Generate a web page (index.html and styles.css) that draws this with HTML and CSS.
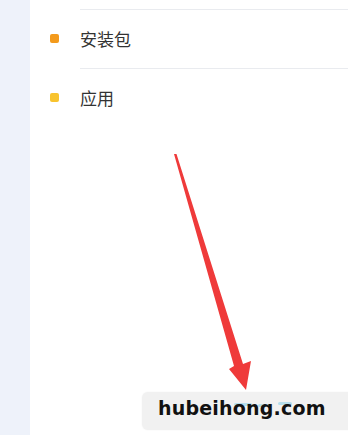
FILE: index.html
```html
<!DOCTYPE html>
<html lang="zh">
<head>
<meta charset="utf-8">
<link rel="stylesheet" href="styles.css">
</head>
<body>
<div class="page">
  <aside class="side"></aside>
  <main class="panel">
    <ul class="list">
      <li class="item"><span class="dot dot-orange"></span><span class="label">安装包</span></li>
      <li class="item"><span class="dot dot-yellow"></span><span class="label">应用</span></li>
    </ul>
  </main>
</div>
<svg class="arrow" width="348" height="435" viewBox="0 0 348 435">
  <polygon points="174,154 176.5,154 243,364 251,361 246,390 229,369 234,366" fill="#ef3a3a"/>
</svg>
<div class="mark">
  <span class="ghost ghost-a"></span>
  <span class="ghost ghost-b"></span>
  <span class="ghost ghost-c"></span>
  <span class="mark-text">hubeihong.com</span>
</div>
</body>
</html>
```
FILE: styles.css
```css
html, body {
  margin: 0;
  padding: 0;
  width: 348px;
  height: 435px;
  overflow: hidden;
  background: #ffffff;
  font-family: "Noto Sans CJK SC", "Noto Sans", sans-serif;
}
.page {
  display: flex;
  height: 435px;
}
.side {
  width: 30px;
  background: #eef2fa;
}
.panel {
  flex: 1;
  background: #ffffff;
}
.list {
  list-style: none;
  margin: 0;
  padding: 9px 0 0 0;
}
.item {
  display: flex;
  align-items: center;
  padding-left: 20px;
}
.dot {
  width: 9px;
  height: 9px;
  border-radius: 2px;
  margin-right: 21px;
  flex: none;
}
.dot-orange { background: #f39a1c; }
.dot-yellow { background: #f8c32e; }
.label {
  flex: 1;
  height: 56px;
  border-top: 1px solid #e9ebef;
  display: flex;
  align-items: center;
  font-size: 17px;
  color: #333333;
  padding-bottom: 2px;
}
.arrow {
  position: absolute;
  left: 0;
  top: 0;
  pointer-events: none;
}
.mark {
  position: absolute;
  left: 142px;
  top: 392px;
  width: 220px;
  height: 38px;
  background: #f1f1f1;
  border-radius: 6px;
  box-shadow: 0 0 2px rgba(0,0,0,0.06);
}
.ghost {
  position: absolute;
  height: 3px;
  background: #a8d8ea;
  border-radius: 2px;
  opacity: 0.8;
}
.ghost-a { left: 92px; top: 11px; width: 18px; }
.ghost-b { left: 116px; top: 12px; width: 12px; }
.ghost-c { left: 136px; top: 10px; width: 14px; }
.mark-text {
  position: absolute;
  left: 16px;
  top: 5px;
  font-family: "DejaVu Sans", sans-serif;
  font-weight: bold;
  font-size: 19px;
  color: #111111;
  letter-spacing: 0.2px;
}
```
